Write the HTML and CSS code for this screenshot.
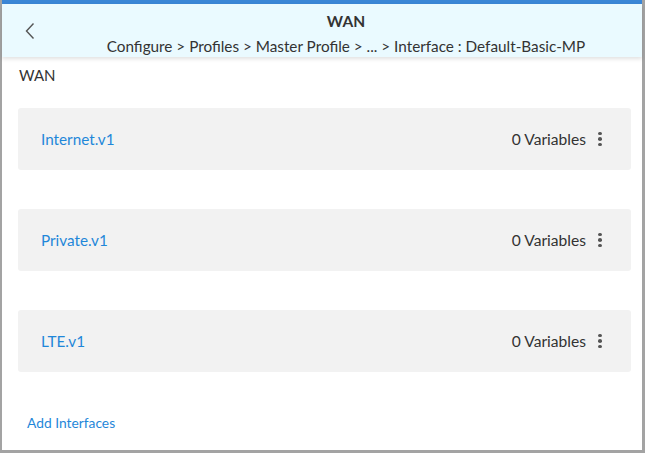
FILE: index.html
```html
<!DOCTYPE html>
<html>
<head>
<meta charset="utf-8">
<link rel="stylesheet" href="styles.css">
</head>
<body>
<div class="frame">
  <div class="topbar"></div>
  <header class="header">
    <button class="back" aria-label="Back">
      <svg width="12" height="18" viewBox="0 0 12 18"><path d="M9.5 1.5 L2.5 9 L9.5 16.5" fill="none" stroke="#555" stroke-width="1.4"/></svg>
    </button>
    <div class="titles">
      <div class="title">WAN</div>
      <div class="crumbs">Configure &gt; Profiles &gt; Master Profile &gt; ... &gt; Interface : Default-Basic-MP</div>
    </div>
  </header>
  <main class="content">
    <div class="section-label">WAN</div>
    <div class="cards">
      <div class="card">
        <a class="name">Internet.v1</a>
        <div class="meta"><span>0 Variables</span><span class="kebab"><i></i><i></i><i></i></span></div>
      </div>
      <div class="card">
        <a class="name">Private.v1</a>
        <div class="meta"><span>0 Variables</span><span class="kebab"><i></i><i></i><i></i></span></div>
      </div>
      <div class="card">
        <a class="name">LTE.v1</a>
        <div class="meta"><span>0 Variables</span><span class="kebab"><i></i><i></i><i></i></span></div>
      </div>
    </div>
    <a class="add">Add Interfaces</a>
  </main>
</div>
</body>
</html>
```
FILE: styles.css
```css
* { box-sizing: border-box; }
html, body { margin: 0; padding: 0; }
body {
  width: 645px;
  height: 453px;
  font-family: Lato, "Open Sans", sans-serif;
  color: #333;
  background: #fff;
  overflow: hidden;
}
.frame {
  width: 645px;
  height: 453px;
  border-left: 2px solid #a3a3a3;
  border-right: 3px solid #a3a3a3;
  border-bottom: 3px solid #a3a3a3;
  display: flex;
  flex-direction: column;
}
.topbar {
  height: 4px;
  background: #3a86d6;
  flex: none;
}
.header {
  height: 53px;
  flex: none;
  background: #eafaff;
  display: flex;
  align-items: center;
  position: relative;
  box-shadow: 0 2px 4px rgba(0,0,0,0.12);
  z-index: 1;
}
.back {
  border: 0;
  background: none;
  padding: 0;
  margin-left: 21px;
  width: 14px;
  height: 20px;
  display: flex;
  align-items: center;
  justify-content: center;
}
.titles {
  flex: 1;
  display: flex;
  flex-direction: column;
  align-items: center;
  margin-left: 13px;
  margin-top: 5px;
}
.title {
  font-weight: 700;
  font-size: 15.5px;
  line-height: 18px;
  color: #333;
}
.crumbs {
  font-size: 15.3px;
  line-height: 18px;
  margin-top: 7px;
  color: #333;
}
.content {
  flex: 1;
  padding: 9px 11px 0 16px;
  display: flex;
  flex-direction: column;
}
.section-label {
  font-size: 15px;
  line-height: 18px;
  margin-left: 1px;
}
.cards {
  display: flex;
  flex-direction: column;
  gap: 39px;
  margin-top: 24px;
}
.card {
  height: 62px;
  background: #f2f2f2;
  border-radius: 3px;
  display: flex;
  align-items: center;
  justify-content: space-between;
  padding: 0 29px 0 23px;
}
.name {
  color: #1f87d9;
  font-size: 15.3px;
}
.meta {
  display: flex;
  align-items: center;
  gap: 12px;
  font-size: 15.6px;
  color: #333;
}
.kebab {
  display: flex;
  flex-direction: column;
  gap: 2px;
  width: 4px;
}
.kebab i {
  display: block;
  width: 4px;
  height: 3.5px;
  border-radius: 50%;
  background: #555;
}
.add {
  color: #1f87d9;
  font-size: 13.8px;
  margin-top: 42px;
  margin-left: 9px;
}
```
